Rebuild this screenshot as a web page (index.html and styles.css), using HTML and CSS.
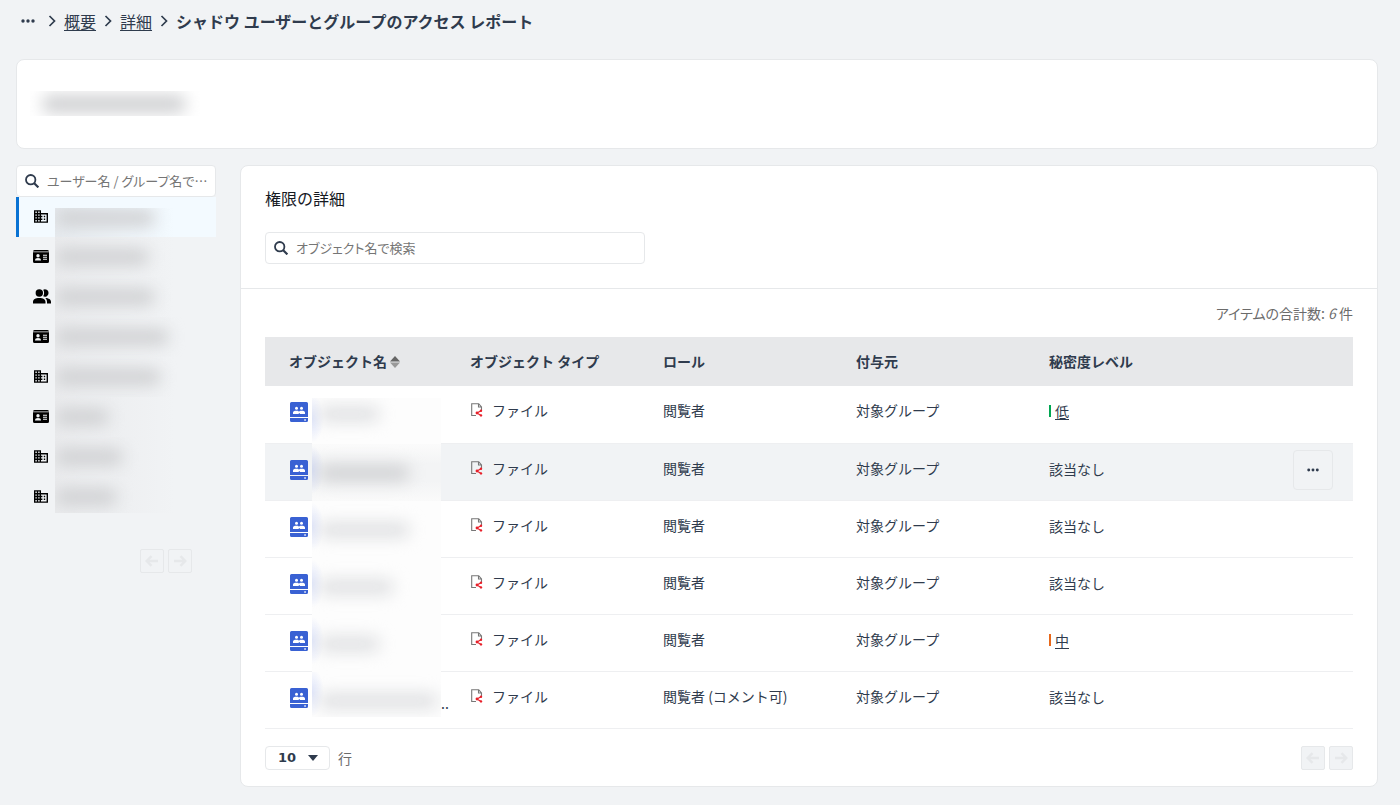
FILE: index.html
```
<!DOCTYPE html>
<html lang="ja">
<head>
<meta charset="utf-8">
<title>シャドウ ユーザーとグループのアクセス レポート</title>
<link rel="stylesheet" href="styles.css">
</head>
<body>
<svg class="sprite" aria-hidden="true">
  <symbol id="i-chevron" viewBox="0 0 8 12"><path d="M1.500 1 6.500 6 1.500 11" fill="none" stroke="currentColor" stroke-width="1.700"/></symbol>
  <symbol id="i-dots" viewBox="0 0 14 4"><circle cx="2" cy="2" r="1.700"/><circle cx="7" cy="2" r="1.700"/><circle cx="12" cy="2" r="1.700"/></symbol>
  <symbol id="i-search" viewBox="0 0 14 14"><circle cx="5.700" cy="5.700" r="4.700" fill="none" stroke="currentColor" stroke-width="1.800"/><path d="m9 9 4.400 4.400" stroke="currentColor" stroke-width="2.200"/></symbol>
  <symbol id="i-building" viewBox="2 3 20 18"><path d="M12 7V3H2v18h20V7H12zM6 19H4v-2h2v2zm0-4H4v-2h2v2zm0-4H4V9h2v2zm0-4H4V5h2v2zm4 12H8v-2h2v2zm0-4H8v-2h2v2zm0-4H8V9h2v2zm0-4H8V5h2v2zm10 12h-8v-2h2v-2h-2v-2h2v-2h-2V9h8v10zm-2-8h-2v2h2v-2zm0 4h-2v2h2v-2z"/></symbol>
  <symbol id="i-card" viewBox="0 0 16 13"><path fill-rule="evenodd" d="M1.500 0h13A1.500 1.500 0 0 1 16 1.500H0A1.500 1.500 0 0 1 1.500 0zM0 2.300h16v9.200A1.500 1.500 0 0 1 14.500 13h-13A1.500 1.500 0 0 1 0 11.500zM5 4a1.700 1.700 0 1 0 0 3.400A1.700 1.700 0 0 0 5 4zM2 10.500h6c0-1.700-1-2.500-3-2.500s-3 .8-3 2.500zM10 4.700v1h4v-1zm0 2v1h4v-1zm0 2v1h4v-1z"/></symbol>
  <symbol id="i-people" viewBox="0 0 18 15"><circle cx="6.300" cy="4" r="3.700"/><path d="M0 14.500v-1.600C0 10.300 2.500 9 6.300 9s6.200 1.300 6.200 3.900v1.600zM10.200.7a3.700 3.700 0 1 1 0 6.600c1.200-1.900 1.200-4.700 0-6.600zM12.300 9.100c3.300.2 5.700 1.400 5.700 3.800v1.600h-4v-1.600c0-1.600-.6-2.900-1.700-3.800z"/></symbol>
  <symbol id="i-left" viewBox="0 0 14 12"><path d="M13 6H2M6.500 1.200 1.700 6l4.800 4.800" fill="none" stroke="currentColor" stroke-width="2.400"/></symbol>
  <symbol id="i-right" viewBox="0 0 14 12"><path d="M1 6h11M7.500 1.200 12.300 6l-4.800 4.800" fill="none" stroke="currentColor" stroke-width="2.400"/></symbol>
  <symbol id="i-drive" viewBox="0 0 18 20"><path fill="#3961d3" d="M1.500 0h15A1.500 1.500 0 0 1 18 1.500V15H0V1.500A1.500 1.500 0 0 1 1.500 0zM0 16h18v2.500a1.500 1.500 0 0 1-1.500 1.500h-15A1.500 1.500 0 0 1 0 18.500z"/><g fill="#fff"><circle cx="6.500" cy="6.300" r="1.500"/><circle cx="11.500" cy="6.300" r="1.500"/><path d="M3 12v-1.500C3 9.300 4.300 8.700 6.300 8.700c1.800 0 2.600.4 2.700 1.300.1-.9.900-1.300 2.700-1.300 2 0 3.300.6 3.300 1.800V12H9.700v-1h-.9v1z"/><path d="M14.300 17.200h1.500v1.500h-1.500z"/></g></symbol>
  <symbol id="i-file" viewBox="0 0 12 14"><path d="M5 12.500H.7V.7h7L10.500 4v3M7.500.7V4h3" fill="none" stroke="#777" stroke-width="1.100"/><path d="M10 7.700 6 10l4 2.400" fill="none" stroke="#e8202a" stroke-width="1.200"/><circle cx="10" cy="7.700" r="1.200" fill="#e8202a"/><circle cx="6" cy="10" r="1.400" fill="#e8202a"/><circle cx="10" cy="12.400" r="1.200" fill="#e8202a"/></symbol>
</svg>

<nav class="crumbs" aria-label="パンくずリスト">
  <button class="crumb-more" aria-label="その他"><svg class="dots"><use href="#i-dots"/></svg></button>
  <svg class="chevron"><use href="#i-chevron"/></svg>
  <a href="#">概要</a>
  <svg class="chevron"><use href="#i-chevron"/></svg>
  <a href="#">詳細</a>
  <svg class="chevron"><use href="#i-chevron"/></svg>
  <h1>シャドウ ユーザーとグループのアクセス レポート</h1>
</nav>

<section class="card banner"><div class="banner-mask"><span class="smudge"></span></div></section>

<div class="columns">
  <aside class="side">
    <label class="search"><svg class="lens"><use href="#i-search"/></svg><input type="text" aria-label="ユーザー名 / グループ名で検索" placeholder="ユーザー名 / グループ名で…"></label>
    <ul class="members">
      <li class="active"><svg class="m-icon building"><use href="#i-building"/></svg><div class="mask"><span class="smudge" style="width:100px"></span></div></li>
      <li><svg class="m-icon id-card"><use href="#i-card"/></svg><div class="mask"><span class="smudge" style="width:94px"></span></div></li>
      <li><svg class="m-icon people"><use href="#i-people"/></svg><div class="mask"><span class="smudge" style="width:100px"></span></div></li>
      <li><svg class="m-icon id-card"><use href="#i-card"/></svg><div class="mask"><span class="smudge" style="width:114px"></span></div></li>
      <li><svg class="m-icon building"><use href="#i-building"/></svg><div class="mask"><span class="smudge" style="width:106px"></span></div></li>
      <li><svg class="m-icon id-card"><use href="#i-card"/></svg><div class="mask"><span class="smudge" style="width:54px"></span></div></li>
      <li><svg class="m-icon building"><use href="#i-building"/></svg><div class="mask"><span class="smudge" style="width:68px"></span></div></li>
      <li class="end"><svg class="m-icon building"><use href="#i-building"/></svg><div class="mask"><span class="smudge" style="width:62px"></span></div></li>
    </ul>
    <div class="pager side-pager">
      <button disabled aria-label="前へ"><svg><use href="#i-left"/></svg></button>
      <button disabled aria-label="次へ"><svg><use href="#i-right"/></svg></button>
    </div>
  </aside>

  <main class="card detail">
    <header class="detail-head">
      <h2>権限の詳細</h2>
      <label class="search wide"><svg class="lens"><use href="#i-search"/></svg><input type="text" aria-label="オブジェクト名で検索" placeholder="オブジェクト名で検索"></label>
    </header>
    <div class="detail-body">
      <p class="total">アイテムの合計数: <em>6</em> 件</p>
      <table>
        <thead>
          <tr><th class="c-name">オブジェクト名<svg class="sort" viewBox="0 0 10 14"><path fill="#666" d="M5 1 10 6.500H0z"/><path fill="#999" d="M5 13 0 7.500h10z"/></svg></th><th class="c-mid">オブジェクト タイプ</th><th class="c-mid">ロール</th><th class="c-mid">付与元</th><th>秘密度レベル</th><th class="c-act"></th></tr>
        </thead>
        <tbody>
          <tr class="first"><td><div class="name"><svg class="drive"><use href="#i-drive"/></svg><div class="mask"><span class="smudge" style="width:62px"></span></div></div></td><td><div class="type"><svg class="file"><use href="#i-file"/></svg>ファイル</div></td><td>閲覧者</td><td>対象グループ</td><td><div class="level"><i class="bar low"></i><a href="#">低</a></div></td><td></td></tr>
          <tr class="hover"><td><div class="name"><svg class="drive"><use href="#i-drive"/></svg><div class="mask"><span class="smudge" style="width:92px"></span></div></div></td><td><div class="type"><svg class="file"><use href="#i-file"/></svg>ファイル</div></td><td>閲覧者</td><td>対象グループ</td><td><div class="level">該当なし</div></td><td class="act"><button class="more" aria-label="操作"><svg class="dots"><use href="#i-dots"/></svg></button></td></tr>
          <tr><td><div class="name"><svg class="drive"><use href="#i-drive"/></svg><div class="mask"><span class="smudge" style="width:92px"></span></div></div></td><td><div class="type"><svg class="file"><use href="#i-file"/></svg>ファイル</div></td><td>閲覧者</td><td>対象グループ</td><td><div class="level">該当なし</div></td><td></td></tr>
          <tr><td><div class="name"><svg class="drive"><use href="#i-drive"/></svg><div class="mask"><span class="smudge" style="width:76px"></span></div></div></td><td><div class="type"><svg class="file"><use href="#i-file"/></svg>ファイル</div></td><td>閲覧者</td><td>対象グループ</td><td><div class="level">該当なし</div></td><td></td></tr>
          <tr><td><div class="name"><svg class="drive"><use href="#i-drive"/></svg><div class="mask"><span class="smudge" style="width:62px"></span></div></div></td><td><div class="type"><svg class="file"><use href="#i-file"/></svg>ファイル</div></td><td>閲覧者</td><td>対象グループ</td><td><div class="level"><i class="bar mid"></i><a href="#">中</a></div></td><td></td></tr>
          <tr class="last"><td><div class="name"><svg class="drive"><use href="#i-drive"/></svg><div class="mask"><span class="smudge" style="width:120px"></span></div><span class="clip">..</span></div></td><td><div class="type"><svg class="file"><use href="#i-file"/></svg>ファイル</div></td><td>閲覧者 (コメント可)</td><td>対象グループ</td><td><div class="level">該当なし</div></td><td></td></tr>
        </tbody>
      </table>
      <footer class="foot">
        <div class="rows"><span class="pick"><select id="rows"><option>10</option></select><svg class="caret" viewBox="0 0 10 6"><path d="M0 0h10L5 6z"/></svg></span><label for="rows">行</label></div>
        <div class="pager main-pager">
          <button disabled aria-label="前へ"><svg><use href="#i-left"/></svg></button>
          <button disabled aria-label="次へ"><svg><use href="#i-right"/></svg></button>
        </div>
      </footer>
    </div>
  </main>
</div>
</body>
</html>
```
FILE: styles.css
```
* { box-sizing: border-box; }
body {
  margin: 0;
  padding: 8px 22px 18px 16px;
  background: #f1f3f5;
  color: #2f3b4d;
  font: 14px/20px "Noto Sans CJK JP", sans-serif;
}
svg { display: block; flex: none; fill: currentColor; }
a { color: inherit; text-underline-offset: 2px; }
button { padding: 0; color: inherit; font: inherit; }
h1, h2, p, ul { margin: 0; padding: 0; }
.sprite { display: none; }

.crumbs { display: flex; align-items: center; gap: 8px; height: 28px; padding-bottom: 2px; font-size: 16px; line-height: 24px; }
.crumbs h1 { font-size: 16px; line-height: 24px; font-weight: 700; }
.crumb-more { width: 24px; height: 24px; border: 0; background: none; display: grid; place-items: center; }
.dots { width: 14px; height: 4px; }
.chevron { width: 8px; height: 12px; }

.card { background: #fff; border: 1px solid #e6e8ea; border-radius: 8px; }
.banner { height: 90px; margin-top: 23px; padding: 31px 13px; }
.banner-mask { width: 170px; height: 25px; margin-left: 0; display: flex; align-items: center; overflow: hidden; }
.banner-mask .smudge { width: 144px; margin-left: 12px; height: 18px; }
.smudge { display: block; flex: none; height: 16px; border-radius: 8px; background: #cfd0d2; filter: blur(8px); }

.columns { display: flex; align-items: flex-start; gap: 24px; margin-top: 16px; }
.side { width: 200px; flex: none; }
.search { display: flex; align-items: center; gap: 8px; height: 32px; padding: 0 8px; border: 1px solid #e6e8ea; border-radius: 4px; background: #fff; }
.search.wide { width: 380px; max-width: 100%; }
.lens { width: 14px; height: 14px; }
.search input { flex: 1; min-width: 0; padding: 0; border: 0; outline: 0; background: none; font: inherit; font-size: 13px; font-feature-settings: "palt"; }
.search input::placeholder { color: #757575; opacity: 1; }

.members { list-style: none; }
.members li { display: flex; align-items: center; height: 40px; padding-left: 16px; }
.members .active { padding-left: 13px; border-left: 3px solid #0972d3; background: #f3faff; }
.m-icon { color: #000; margin-right: 8px; }
.building { width: 14px; height: 13px; margin: 0 7px 2px 2px; }
.id-card { width: 16px; height: 13px; margin: 0 6px 2px 1px; }
.people { width: 18px; height: 15px; margin: 0 4px 2px 1px; }
.members .mask { display: flex; align-items: center; width: 133px; height: 40px; overflow: hidden; background: linear-gradient(90deg, #eaebed, #f1f3f5 90%); }
.members .active .mask { align-self: flex-end; height: 29px; padding-bottom: 10px; background: linear-gradient(90deg, #e6eaee, #f3faff 90%); }
.members .end .mask { align-self: flex-start; height: 36px; padding-top: 4px; }

.pager { display: flex; gap: 4px; }
.pager button { display: grid; place-items: center; width: 24px; height: 24px; border: 1px solid #e6e8ea; border-radius: 2px; background: #f1f3f5; color: #e6e8ea; }
.pager svg { width: 14px; height: 12px; }
.side-pager { justify-content: flex-end; margin: 32px 24px 0 0; }

.detail { flex: 1; min-width: 0; }
.detail-head { padding: 20px 24px 24px; border-bottom: 1px solid #e6e8ea; }
.detail-head h2 { margin-bottom: 22px; color: #16191f; font-size: 16px; line-height: 24px; font-weight: 400; }
.detail-body { padding: 14px 24px 16px; }
.total { margin-bottom: 14px; color: #6b6b6b; text-align: right; font-feature-settings: "palt"; }

table { width: 100%; border-collapse: collapse; table-layout: fixed; text-align: left; }
th { height: 49px; padding: 0 0 2px 24px; background: #e7e8ea; font-weight: 700; white-space: nowrap; }
.c-name { width: 181px; }
.c-mid { width: 193px; }
.c-act { width: 84px; }
.sort { display: inline-block; width: 10px; height: 14px; margin-left: 3px; vertical-align: -2px; }
td { height: 57px; padding: 0 0 10px 24px; box-shadow: inset 0 -1px #eeeff1; }
.first td { height: 58px; }
td:first-child, td:nth-child(5), td.act { padding-bottom: 0; }
td.act { padding-right: 20px; }
.hover td { background: #f1f3f5; }
.name { display: flex; align-items: center; height: 57px; white-space: nowrap; }
.first .name { height: 58px; }
.drive { width: 18px; height: 20px; margin: 0 4px 6px 1px; }
.name .mask { display: flex; align-items: center; flex: none; width: 129px; height: 57px; overflow: hidden; background: radial-gradient(ellipse 12px 24px at 0 45%, #dfe5fa, #fdfdfd); }
.name .smudge { margin-left: 6px; background: #e0e1e3; }
.first .name .mask { align-self: flex-end; height: 46px; padding-bottom: 14px; }
.name .clip { padding-top: 4px; }
.hover .name .mask { background: radial-gradient(ellipse 12px 24px at 0 45%, #d5dcf3, transparent), linear-gradient(#fbfbfb, #f3f4f5 35%, #f3f4f5 65%, #fafafa); }
.hover .name .smudge { background: #d0d1d3; }
.last .name .mask { align-self: flex-start; height: 45px; padding-top: 12px; }
.type { display: flex; align-items: center; gap: 9px; }
.file { width: 12px; height: 14px; margin-left: 1px; }
.level { display: flex; align-items: center; gap: 4px; padding-bottom: 8px; }
.bar { width: 2px; height: 12px; }
.low { background: #00a651; }
.mid { background: #e8681a; }
.more { display: grid; place-items: center; width: 40px; height: 40px; margin-bottom: 6px; margin-left: auto; border: 1px solid #e6e8ea; border-radius: 4px; background: none; }
.more .dots { width: 12px; }

.foot { display: flex; align-items: center; justify-content: space-between; margin-top: 17px; }
.rows { display: flex; align-items: center; gap: 8px; color: #6b6b6b; }
.pick { position: relative; color: #2f3b4d; }
.pick select { display: block; width: 65px; height: 24px; padding: 0 12px; appearance: none; border: 1px solid #e6e8ea; border-radius: 4px; background: #fff; color: inherit; font: 700 13px/20px "DejaVu Sans", sans-serif; }
.caret { position: absolute; right: 12px; top: 9px; width: 10px; height: 6px; pointer-events: none; }
```
